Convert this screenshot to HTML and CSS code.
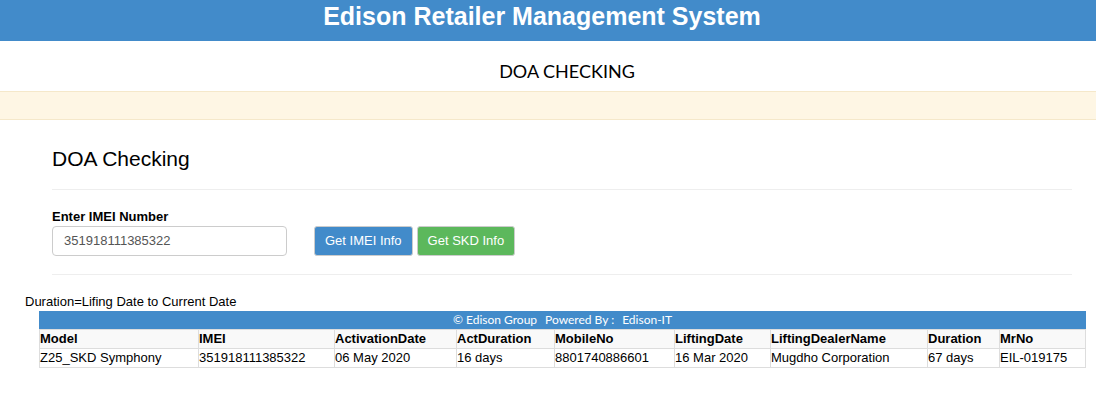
FILE: index.html
```html
<!DOCTYPE html>
<html lang="en">
<head>
<meta charset="utf-8">
<title>Edison Retailer Management System</title>
<link rel="stylesheet" href="styles.css">
</head>
<body>
<header class="banner"><h1 class="banner-title">Edison Retailer Management System</h1></header>
<h2 class="page-title">DOA CHECKING</h2>
<div class="notice-bar"></div>
<main>
  <form class="search">
    <h3 class="search-title">DOA Checking</h3>
    <div class="search-row">
      <div class="field">
        <label class="field-label" for="imei">Enter IMEI Number</label>
        <input class="field-input" id="imei" type="text" value="351918111385322">
      </div>
      <div class="actions">
        <button class="btn btn-primary" type="button">Get IMEI Info</button>
        <button class="btn btn-success" type="button">Get SKD Info</button>
      </div>
    </div>
  </form>
  <section class="results">
    <p class="results-note">Duration=Lifing Date to Current Date</p>
    <div class="results-body">
      <div class="credit"><span>© Edison Group</span><span>Powered By :</span><span>Edison-IT</span></div>
      <table class="grid">
        <colgroup>
          <col class="col-model"><col class="col-imei"><col class="col-activation"><col class="col-act-duration"><col class="col-mobile"><col class="col-lifting"><col class="col-dealer"><col class="col-duration"><col class="col-mr">
        </colgroup>
        <thead>
          <tr><th>Model</th><th>IMEI</th><th>ActivationDate</th><th>ActDuration</th><th>MobileNo</th><th>LiftingDate</th><th>LiftingDealerName</th><th>Duration</th><th>MrNo</th></tr>
        </thead>
        <tbody>
          <tr><td>Z25_SKD Symphony</td><td>351918111385322</td><td>06 May 2020</td><td>16 days</td><td>8801740886601</td><td>16 Mar 2020</td><td>Mugdho Corporation</td><td>67 days</td><td>EIL-019175</td></tr>
        </tbody>
      </table>
    </div>
  </section>
</main>
</body>
</html>
```
FILE: styles.css
```css
* { box-sizing: border-box; }
body {
  margin: 0;
  background: #fff;
  color: #000;
  font: 13px/18px "Liberation Sans", Arial, sans-serif;
}
h1, h2, h3, p { margin: 0; }
.banner {
  padding: 1px 0 10px;
  background: #428bca;
  color: #fff;
  text-align: center;
}
.banner-title { padding-right: 12px; font-size: 25px; line-height: 30px; }
.page-title {
  padding: 18px 0 8px 38px;
  font: 400 18px/24px Lato, Calibri, sans-serif;
  text-align: center;
}
.notice-bar {
  height: 29px;
  border: solid #f5e8ca;
  border-width: 1px 0;
  background: #fef6e4;
}
.search { margin: 0 24px 0 52px; }
.search-title {
  padding: 26px 0 17px;
  border-bottom: 1px solid #eee;
  font-size: 21px;
  font-weight: 400;
  line-height: 26px;
}
.search-row {
  display: flex;
  align-items: flex-end;
  gap: 27px;
  padding: 18px 0;
  border-bottom: 1px solid #eee;
}
.field { display: flex; flex-direction: column; width: 235px; }
.field-label { font-weight: 700; }
.field-input {
  width: 100%;
  height: 30px;
  padding: 4px 11px 6px;
  border: 1px solid #ccc;
  border-radius: 4px;
  color: #555;
  font: inherit;
}
.actions { display: flex; gap: 4px; }
.btn {
  height: 30px;
  padding: 4px 10px;
  border: 1px solid #ccc;
  border-radius: 3px;
  color: #fff;
  font: inherit;
}
.btn-primary { background: #428bca; }
.btn-success { background: #5cb85c; }
.results { padding: 18px 10px 0 25px; }
.results-body { margin-left: 14px; }
.credit {
  display: flex;
  justify-content: center;
  gap: 8px;
  background: #428bca;
  color: #fff;
  font: 12px/18px Lato, Calibri, sans-serif;
}
.grid { width: 100%; table-layout: fixed; border-collapse: collapse; }
.grid th, .grid td {
  padding: 0;
  border: 1px solid #ddd;
  text-align: left;
}
.grid th { background: #f9f9f9; }
.col-model { width: 159px; }
.col-imei { width: 136px; }
.col-activation { width: 122px; }
.col-act-duration { width: 98px; }
.col-mobile { width: 120px; }
.col-lifting { width: 96px; }
.col-dealer { width: 157px; }
.col-duration { width: 72px; }
.col-mr { width: 86px; }
```
